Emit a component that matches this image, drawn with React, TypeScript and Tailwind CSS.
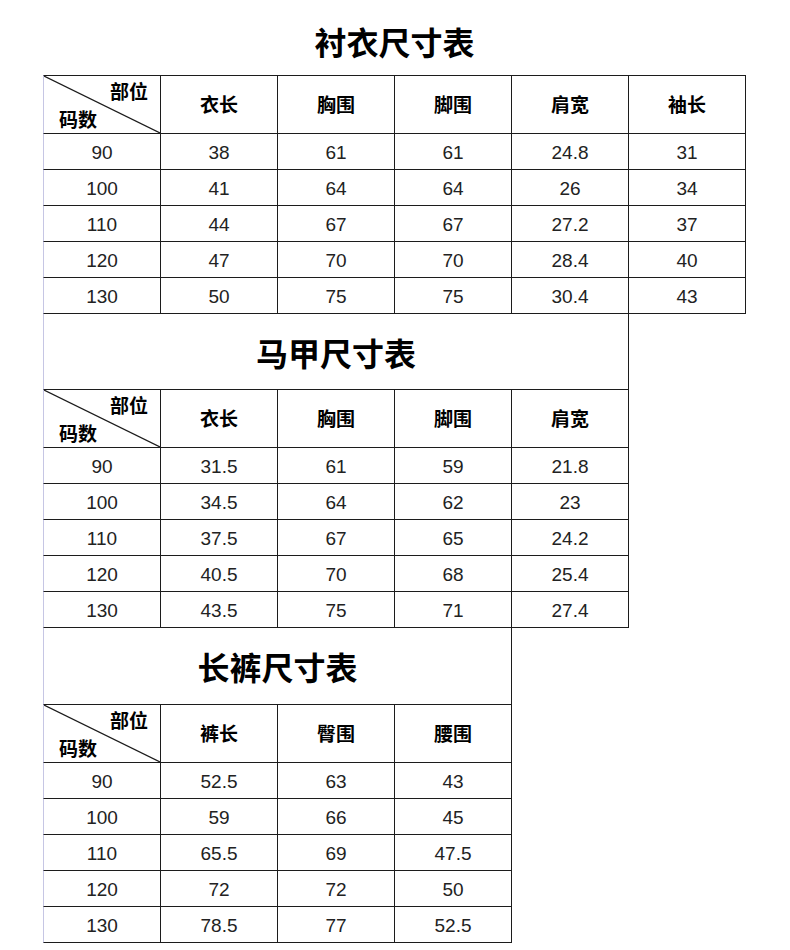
const cjk = "font-['Noto_Sans_CJK_SC','Noto_Sans',sans-serif]";
const num = "font-['Liberation_Sans',Arial,sans-serif]";

type Table = {
  title: string;
  titleClass: string;
  cols: string[];
  rows: (string | number)[][];
};

const tables: Table[] = [
  {
    title: '衬衣尺寸表',
    titleClass: 'h-[75px] w-[703px] pt-[6px]',
    cols: ['衣长', '胸围', '脚围', '肩宽', '袖长'],
    rows: [
      [90, 38, 61, 61, 24.8, 31],
      [100, 41, 64, 64, 26, 34],
      [110, 44, 67, 67, 27.2, 37],
      [120, 47, 70, 70, 28.4, 40],
      [130, 50, 75, 75, 30.4, 43],
    ],
  },
  {
    title: '马甲尺寸表',
    titleClass: 'h-[76px] w-[586px] border-l border-l-[#c6c6e4] border-r border-b border-[#1c1c1c]',
    cols: ['衣长', '胸围', '脚围', '肩宽'],
    rows: [
      [90, 31.5, 61, 59, 21.8],
      [100, 34.5, 64, 62, 23],
      [110, 37.5, 67, 65, 24.2],
      [120, 40.5, 70, 68, 25.4],
      [130, 43.5, 75, 71, 27.4],
    ],
  },
  {
    title: '长裤尺寸表',
    titleClass: 'h-[77px] w-[469px] border-l border-l-[#c6c6e4] border-r border-b border-[#1c1c1c]',
    cols: ['裤长', '臀围', '腰围'],
    rows: [
      [90, 52.5, 63, 43],
      [100, 59, 66, 45],
      [110, 65.5, 69, 47.5],
      [120, 72, 72, 50],
      [130, 78.5, 77, 52.5],
    ],
  },
];

// first column carries the pale left edge, so it is one pixel wider
function cellWidth(i: number) {
  return i === 0 ? 'w-[118px] border-l border-l-[#c6c6e4]' : 'w-[117px]';
}

function HeaderRow({ cols, first }: { cols: string[]; first: boolean }) {
  return (
    <div className={`flex ${first ? 'h-[59px]' : 'h-[58px]'}`}>
      <div
        className={`relative ${cellWidth(0)} h-full border-r border-b border-[#1c1c1c] ${
          first ? 'border-t' : ''
        }`}
      >
        <svg className="absolute inset-0 w-full h-full" preserveAspectRatio="none" viewBox="0 0 100 100">
          <line x1="0" y1="0" x2="100" y2="100" stroke="#1c1c1c" strokeWidth="1.2" vectorEffect="non-scaling-stroke" />
        </svg>
        <span className={`absolute top-[5px] right-[12px] text-[19px] font-bold leading-none text-black ${cjk}`}>
          部位
        </span>
        <span className={`absolute bottom-[5px] left-[15px] text-[19px] font-bold leading-none text-black ${cjk}`}>
          码数
        </span>
      </div>
      {cols.map((c) => (
        <div
          key={c}
          className={`${cellWidth(1)} h-full flex items-center justify-center border-r border-b border-[#1c1c1c] ${
            first ? 'border-t' : ''
          } text-[19px] font-bold text-black ${cjk}`}
        >
          {c}
        </div>
      ))}
    </div>
  );
}

function SizeTable({ t, index }: { t: Table; index: number }) {
  return (
    <div>
      <div className={`${t.titleClass} flex items-center justify-center`}>
        <span className={`text-[32px] font-bold text-black ${cjk}`}>{t.title}</span>
      </div>
      <HeaderRow cols={t.cols} first={index === 0} />
      {t.rows.map((r, ri) => (
        <div key={ri} className="flex h-[36px]">
          {r.map((v, ci) => (
            <div
              key={ci}
              className={`${cellWidth(ci)} h-full flex items-center justify-center pt-[3px] border-r border-b border-[#1c1c1c] text-[19px] text-[#222] ${num}`}
            >
              {v}
            </div>
          ))}
        </div>
      ))}
    </div>
  );
}

export default function App() {
  return (
    <div className="w-[790px] h-[950px] bg-white pl-[43px] overflow-hidden">
      {tables.map((t, i) => (
        <SizeTable key={t.title} t={t} index={i} />
      ))}
    </div>
  );
}
